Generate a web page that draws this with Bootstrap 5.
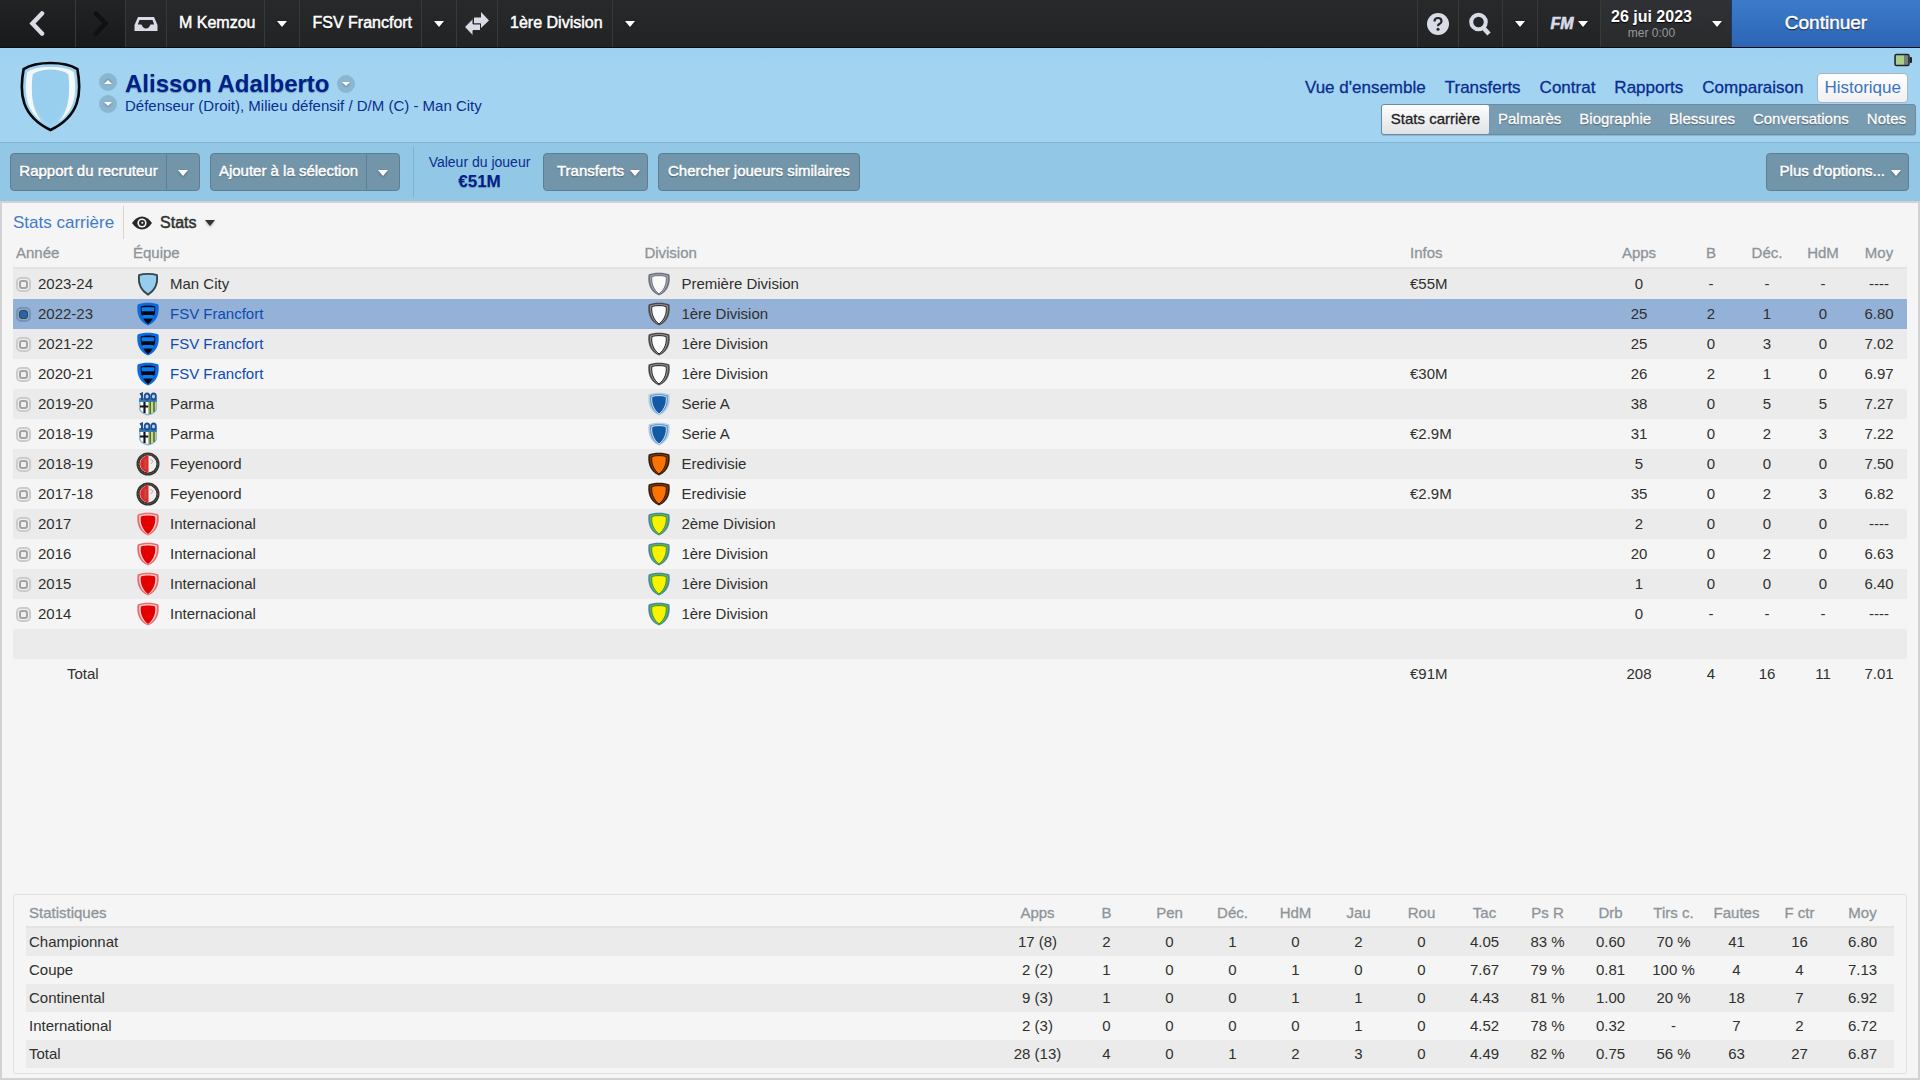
<!DOCTYPE html>
<html lang="fr">
<head>
<meta charset="utf-8">
<meta name="viewport" content="width=device-width, initial-scale=1">
<title>Alisson Adalberto - Historique</title>
<link href="https://cdn.jsdelivr.net/npm/bootstrap@5.3.0/dist/css/bootstrap.min.css" rel="stylesheet">
<style>
body{font-family:"Liberation Sans",Arial,sans-serif;font-size:15px;line-height:20px;color:#2f302c;background:#f5f5f5}
button{font-family:inherit}
.semi{-webkit-text-stroke:.5px currentColor}
.caret{display:inline-block;border:5px solid transparent;border-top:6px solid currentColor;border-bottom:0;filter:drop-shadow(0 1px 1px rgba(0,0,0,.3))}
.caret-sm{border-width:4px 4px 0}
.caret-up{transform:rotate(180deg)}

/* top bar */
.topbar{height:48px;background:linear-gradient(#28292b,#222325);border-bottom:1px solid #0d0d0e}
.topbar button{height:100%;border:0;border-left:1px solid #38393b;background:none;color:#fff;padding:0;font-size:16px;text-shadow:0 1px 1px #000;display:flex;align-items:center;justify-content:center}
.topbar .nav-arrow{background:linear-gradient(#222325,#18191a)}
.topbar .nav-name{padding:0 9px 2px 12px}
.w-back{width:75px}.w-next{width:50px}.w-41{width:41px}.w-35{width:35px}.w-44{width:44px}.w-63{width:63px}
.topbar .date-box{width:131px;background:linear-gradient(#303134,#292a2c);padding:0 9px 0 10px;justify-content:space-between}
.date-day{font-weight:bold;line-height:18px}
.date-hour{font-size:12px;line-height:14px;color:#98999b;text-shadow:none}
.fm-logo{font-size:16px;font-weight:bold;font-style:italic;color:#d9dce6;-webkit-text-stroke:.6px #d9dce6;text-shadow:none}
.topbar .go-on{width:189px;font-size:19px;background:linear-gradient(#3c7bca,#2c65b5);border-left:1px solid #173a6b;padding-bottom:2px}

/* player header */
.player-head{height:94px;background:linear-gradient(#9dd1ef,#a2d4f2 20%);position:relative}
.crest-lg{width:63px;height:71px;margin:13px 0 0 19px}
.step-btns{padding-top:25px;margin-left:17px}
.round-btn{width:18px;height:18px;border-radius:50%;border:0;background:#8ab6d0;color:#fff;padding:0;display:flex;align-items:center;justify-content:center}
.identity{padding-top:22px}
.player-name{font-size:24px;line-height:28px;font-weight:bold;color:#00218a;text-shadow:0 1px 1px rgba(0,0,0,.3);margin:0}
.player-role{color:#0a2d8f;line-height:16px}
.head-nav{padding-top:25px}
.battery{position:absolute;right:8px;top:5px}
.main-tabs{gap:19px;font-size:17px;margin-right:12px}
.main-tabs.semi{-webkit-text-stroke-width:.3px}
.main-tabs a{color:#0a2d8f;text-decoration:none}
.main-tabs a.current{color:#3a74c4;background:linear-gradient(#fff,#f1f1f1);border:1px solid #a5b7c2;border-radius:4px;padding:4px 6px;margin-left:-5px;-webkit-text-stroke-width:0}
.sub-tabs{background:#789cb2;border:1px solid #688ca1;border-radius:3px;font-size:15px;height:31px;margin:1px 4px 0 0;box-shadow:0 1px 1px rgba(0,0,0,.15)}
.sub-tabs.semi{-webkit-text-stroke-width:.3px}
.sub-tabs a{color:#fff;text-decoration:none;line-height:28px;padding:0 9px;text-shadow:0 1px 1px rgba(0,0,0,.5)}
.sub-tabs a.current{color:#222;background:linear-gradient(#fdfdfd,#dfe2e5);border-radius:2px;text-shadow:none}

/* action bar */
.action-bar{height:59px;background:#93c7e6;border-top:1px solid #82b4d2;padding:0 11px 0 10px;gap:10px}
.act{height:38px;background:#7295aa;border:1px solid #5c7f94;border-radius:4px;color:#fff;font-size:15px;padding:0 9px 2px;text-shadow:0 1px 1px rgba(0,0,0,.5)}
.act:hover{background:#688ba0;color:#fff}
.act-main{width:157px;padding:0 0 2px;border-radius:4px 0 0 4px}
.act-drop{width:34px;padding:2px 0 0;border-radius:0 4px 4px 0;margin-left:-1px;display:flex;align-items:center;justify-content:center}
.act-menu{padding:0 7px 2px 13px;gap:6px;display:flex;align-items:center}
.act-menu .caret{margin-top:4px}
.value-box{border-left:1px solid #7fb0ce;height:50px;padding:0 2px 0 14px;margin-left:3px;width:120px;color:#0a2d8f;font-size:14px;line-height:19px}
.value-box strong{font-size:17px;color:#00218a;text-shadow:0 1px 1px rgba(0,0,0,.25)}

/* content panel */
.sheet{border:2px solid #d2d2d2;padding:0 11px 4px 11px}
.view-bar{height:33px;margin-top:3px}
.view-title{font-size:17px;color:#3f7acb;padding-right:9px;border-right:1px solid #d5d5d5;line-height:33px;margin:0;font-weight:normal}
.view-pick{border:0;background:none;font-size:16px;color:#333;padding:0;gap:8px;margin-left:8px}
.grid{--bs-table-bg:transparent;table-layout:fixed;margin:0;color:inherit}
.grid>thead>tr>th{padding:0 6px;font-size:15px;font-weight:normal;color:#8d949a;-webkit-text-stroke:.3px #8d949a;line-height:28px;border-bottom:2px solid #e3e3e3;text-align:center;white-space:nowrap}
.grid>tbody>tr>td,.grid>tbody>tr>th{padding:0 3px;height:30px;line-height:30px;border:0;box-shadow:none;text-align:center;color:#2f302c;font-weight:normal;white-space:nowrap}
.grid>tbody>tr:nth-child(odd)>*{background:#ebebeb}
.grid>tbody>tr.chosen>*{background:#94b1d8}
.grid>*>tr>.t-left{text-align:left;padding-left:6px}
.grid>thead>tr>.t-year{padding-left:3px}
.grid a{color:#0b4bb3;text-decoration:none}
.grid>tbody>tr>.sum-label{padding-left:54px}
.c-year{width:114px}.c-team{width:27%}.c-info{width:191px}.c-apps{width:88px}.c-num{width:56px}
.season{display:flex;align-items:center;gap:7px;margin-left:-3px}
.club{display:flex;align-items:center;gap:10px;margin-left:3px}
.badge-svg{width:24px;height:24px;flex:none}
.pick{appearance:none;width:15px;height:15px;margin:0;border:2px solid #cbcbcb;border-radius:5px;background:#f0f0f0;display:flex;align-items:center;justify-content:center;flex:none}
.pick::before{content:"";width:9px;height:9px;border:2px solid #a3a3a3;border-radius:3px;flex:none}
.pick:checked{background:#8aa7cf;border-color:#7893ba}
.pick:checked::before{background:#2d62a5;border:1px solid #2a4a45}

.stat-box{border:1px solid #e1e1e1;border-radius:2px;padding:5px 12px 5px 12px}
.stat-box .grid>tbody>tr>*{height:28px;line-height:28px}
.stat-box .grid>thead>tr>th{line-height:26px;padding:0}
.stat-box .grid>*>tr>.t-left{padding-left:3px}
.s-apps{width:75px}.s-num{width:63px}
</style>
<script src="https://cdn.jsdelivr.net/npm/bootstrap@5.3.0/dist/js/bootstrap.bundle.min.js"></script>
</head>
<body class="d-flex flex-column min-vh-100">

<svg width="0" height="0" class="position-absolute" aria-hidden="true">
  <defs>
    <path id="sh" d="M12 .8C8 .8 4.300 1.300 1.600 2.400C.4 10 2 18.800 12 23.600C22 18.800 23.600 10 22.400 2.400C19.700 1.300 16 .8 12 .8Z"/>
    <path id="sh-mid" d="M12 2.200C8.800 2.200 5.800 2.500 3.300 3.400C2.400 10.500 4.200 18 12 22.600C19.800 18 21.600 10.500 20.700 3.400C18.200 2.500 15.200 2.200 12 2.200Z"/>
    <path id="sh-in" d="M12 3.600C9.300 3.600 7 3.800 4.900 4.500C4 10.500 6 17.500 12 22C18 17.500 20 10.500 19.100 4.500C17 3.800 14.700 3.600 12 3.600Z"/>
    <symbol id="city" viewBox="0 0 24 24"><path d="M12 1.800C8.500 1.800 5.500 2.200 3 3.200C2.200 10.500 4 18 12 22.600C20 18 21.800 10.500 21 3.200C18.500 2.200 15.500 1.800 12 1.800Z" fill="#96cdec" stroke="#34464f" stroke-width="1.800"/></symbol>
    <symbol id="fsv" viewBox="0 0 24 24"><use href="#sh" fill="#0a6be0"/><use href="#sh-in" fill="#06080c"/><rect x="5.600" y="5.300" width="12.800" height="4" rx="1" fill="#0b7bf5"/><rect x="6.200" y="13" width="11.600" height="3.600" rx="1" fill="#0b7bf5"/></symbol>
    <symbol id="parma" viewBox="0 0 24 24"><path d="M3 8H21V16C21 20 17 22.500 12 23.500C7 22.500 3 20 3 16Z" fill="#8eb6cf"/><path d="M4.500 10H12V22C7.500 21 4.500 19 4.500 16Z" fill="#fff"/><path d="M8.500 9V21M4 14.500H12.500" stroke="#11151c" stroke-width="2.200"/><path d="M12.500 10H19.800V16C19.800 19.500 16.500 21.500 12.500 22Z" fill="#e7dc2c"/><path d="M14.200 10V22M18 10V20" stroke="#2563a5" stroke-width="1.500"/><rect x="3.200" y="6" width="17.600" height="4" fill="#3b79ac"/><path d="M4 2.500L6 1.500V8" fill="none" stroke="#1c4c93" stroke-width="2"/><ellipse cx="11" cy="4.500" rx="2.400" ry="3" fill="#b9d7ea" stroke="#1c4c93" stroke-width="1.800"/><ellipse cx="17.500" cy="4.500" rx="2.400" ry="3" fill="#b9d7ea" stroke="#1c4c93" stroke-width="1.800"/></symbol>
    <symbol id="feye" viewBox="0 0 24 24"><circle cx="12" cy="12" r="11.500" fill="#37342e"/><circle cx="12" cy="12" r="9.800" fill="none" stroke="#6a655a" stroke-dasharray="1.500 1.500"/><circle cx="12" cy="12" r="8.400" fill="#f1f0ee"/><path d="M12.500 3.600A8.400 8.400 0 0 0 12.500 20.400Z" fill="#e0252f"/><path d="M9.500 7V17" stroke="#c5503f" stroke-width="2"/><path d="M14 7L17 9L15 12" fill="none" stroke="#b9b4a8"/></symbol>
    <symbol id="inter" viewBox="0 0 24 24"><use href="#sh" fill="#ec6a6c"/><use href="#sh-mid" fill="#fad0d0"/><use href="#sh-in" fill="#e20000"/></symbol>
    <symbol id="prem" viewBox="0 0 24 24"><use href="#sh" fill="#6c717e"/><use href="#sh-mid" fill="#a9adb8"/><use href="#sh-in" fill="#fafafa" stroke="#4e5463" stroke-width=".8"/></symbol>
    <symbol id="ger" viewBox="0 0 24 24"><use href="#sh" fill="#4a4a4a"/><use href="#sh-mid" fill="#9b9b9b"/><use href="#sh-in" fill="#fcfcfc" stroke="#222" stroke-width="1"/></symbol>
    <symbol id="ita" viewBox="0 0 24 24"><use href="#sh" fill="#b4cde5"/><use href="#sh-mid" fill="#5a90c8"/><use href="#sh-in" fill="#125aa4" stroke="#e6f0f8" stroke-width=".9"/></symbol>
    <symbol id="ned" viewBox="0 0 24 24"><use href="#sh" fill="#3a1c08"/><use href="#sh-mid" fill="#8a4310"/><use href="#sh-in" fill="#fb7300" stroke="#2a1204" stroke-width="1"/></symbol>
    <symbol id="bra" viewBox="0 0 24 24"><use href="#sh" fill="#4a86a0"/><use href="#sh-mid" fill="#74b84c"/><use href="#sh-in" fill="#fbf200" stroke="#2e9a2c" stroke-width="1"/></symbol>
  </defs>
</svg>

<nav class="topbar d-flex" aria-label="Navigation">
  <button type="button" class="nav-arrow w-back border-0" aria-label="Retour"><svg width="20" height="26" viewBox="0 0 20 26"><path d="M14 2.500L4.500 12.500L14 22.500" fill="none" stroke="#d9dce6" stroke-width="4.500" stroke-linecap="round"/></svg></button>
  <button type="button" class="nav-arrow w-next" aria-label="Suivant"><svg width="18" height="26" viewBox="0 0 18 26"><path d="M4 2.500L13.500 12.500L4 22.500" fill="none" stroke="#101112" stroke-width="4.500" stroke-linecap="round"/></svg></button>
  <button type="button" class="w-41" aria-label="Messages"><svg width="24" height="16" viewBox="0 0 24 16"><path fill="#d9dce6" fill-rule="evenodd" d="M4 1H20L23.500 9V15H.5V9ZM5.500 4L3.800 8.500H7.500Q9 12.500 12 12.500T16.500 8.500H20.200L18.500 4Z"/></svg></button>
  <button type="button" class="nav-name semi">M Kemzou</button>
  <button type="button" class="w-35" aria-label="Menu M Kemzou"><span class="caret"></span></button>
  <button type="button" class="nav-name semi">FSV Francfort</button>
  <button type="button" class="w-35" aria-label="Menu FSV Francfort"><span class="caret"></span></button>
  <button type="button" class="w-41" aria-label="Changer"><svg width="24" height="24" viewBox="0 0 24 24"><path fill="#d9dce6" d="M16 0L24 8.500L16 16V11.500H9V5.500H16Z"/><path fill="#d9dce6" stroke="#242527" stroke-width="1" d="M8 6.500L-.5 15L8 23.800V18.500H15.500V12H8Z"/></svg></button>
  <button type="button" class="nav-name semi">1ère Division</button>
  <button type="button" class="w-35" aria-label="Menu 1ère Division"><span class="caret"></span></button>
  <button type="button" class="w-41 ms-auto" aria-label="Aide"><svg width="22" height="22" viewBox="0 0 22 22"><circle cx="11" cy="11" r="11" fill="#d9dce6"/><path d="M7.500 8.500Q7.500 5 11 5T14.500 8.200Q14.500 9.800 12.700 10.800T11 13.200" fill="none" stroke="#242527" stroke-width="2.200"/><circle cx="11" cy="16.200" r="1.500" fill="#242527"/></svg></button>
  <button type="button" class="w-44" aria-label="Rechercher"><svg width="24" height="24" viewBox="0 0 24 24"><circle cx="9.500" cy="10" r="7.300" fill="none" stroke="#d9dce6" stroke-width="4"/><path d="M14.500 16L20 22" stroke="#d9dce6" stroke-width="4.500"/></svg></button>
  <button type="button" class="w-35" aria-label="Menu recherche"><span class="caret"></span></button>
  <button type="button" class="w-63 gap-1"><span class="fm-logo">FM</span><span class="caret"></span></button>
  <button type="button" class="date-box"><span><span class="date-day d-block">26 jui 2023</span><span class="date-hour d-block">mer 0:00</span></span><span class="caret"></span></button>
  <button type="button" class="go-on semi">Continuer</button>
</nav>

<header>
  <div class="player-head d-flex">
    <svg class="crest-lg" viewBox="0 0 62 70" role="img" aria-label="Man City"><path d="M31 2C21 2 11 4 4.500 8C0 32 2 54 31 68C60 54 62 32 57.500 8C51 4 41 2 31 2Z" fill="#a0d3f1" stroke="#05080a" stroke-width="2.600"/><path d="M31 6C22 6 14 7 8 11C5 30 6 48 23 60C11 46 12 30 14 13C24 7.500 38 7.500 48 13C50 30 51 46 39 60C56 48 57 30 54 11C48 7 40 6 31 6Z" fill="#f4f8fb"/><path d="M31 8.500C24 8.500 18 10 13.500 13C11 32 13 50 31 62C49 50 51 32 48.500 13C44 10 38 8.500 31 8.500Z" fill="#98cfef"/></svg>
    <div class="step-btns d-flex flex-column gap-1">
      <button type="button" class="round-btn" aria-label="Joueur précédent"><span class="caret caret-sm caret-up"></span></button>
      <button type="button" class="round-btn" aria-label="Joueur suivant"><span class="caret caret-sm"></span></button>
    </div>
    <div class="identity ms-2">
      <div class="d-flex align-items-center gap-2"><h1 class="player-name">Alisson Adalberto</h1><button type="button" class="round-btn" aria-label="Menu joueur"><span class="caret caret-sm"></span></button></div>
      <div class="player-role">Défenseur (Droit), Milieu défensif / D/M (C) - Man City</div>
    </div>
    <div class="head-nav ms-auto d-flex flex-column align-items-end">
      <nav class="main-tabs semi d-flex align-items-center" aria-label="Sections">
        <a href="#">Vue d'ensemble</a><a href="#">Transferts</a><a href="#">Contrat</a><a href="#">Rapports</a><a href="#">Comparaison</a><a href="#" class="current" aria-current="page">Historique</a>
      </nav>
      <nav class="sub-tabs semi d-flex" aria-label="Historique">
        <a href="#" class="current" aria-current="page">Stats carrière</a><a href="#">Palmarès</a><a href="#">Biographie</a><a href="#">Blessures</a><a href="#">Conversations</a><a href="#">Notes</a>
      </nav>
    </div>
    <svg class="battery" width="18" height="14" viewBox="0 0 18 14"><rect x="1" y="1.500" width="14" height="11" rx="1.500" fill="#74817a" stroke="#20272a" stroke-width="1.500"/><rect x="2" y="2.500" width="8" height="9" fill="#a9d08a"/><rect x="15.500" y="4" width="2.500" height="6" rx="1" fill="#20272a"/></svg>
  </div>
  <div class="action-bar d-flex align-items-center">
    <div class="d-flex">
      <button type="button" class="act act-main semi">Rapport du recruteur</button>
      <button type="button" class="act act-drop" aria-label="Options du rapport"><span class="caret"></span></button>
    </div>
    <div class="d-flex">
      <button type="button" class="act act-main semi">Ajouter à la sélection</button>
      <button type="button" class="act act-drop" aria-label="Options de sélection"><span class="caret"></span></button>
    </div>
    <div class="value-box d-flex flex-column justify-content-center text-center text-nowrap"><span>Valeur du joueur</span><strong>€51M</strong></div>
    <button type="button" class="act act-menu semi">Transferts<span class="caret"></span></button>
    <button type="button" class="act semi">Chercher joueurs similaires</button>
    <button type="button" class="act act-menu semi ms-auto">Plus d'options...<span class="caret"></span></button>
  </div>
</header>

<main class="sheet flex-grow-1 d-flex flex-column">
  <div class="view-bar d-flex align-items-center">
    <h2 class="view-title">Stats carrière</h2>
    <button type="button" class="view-pick semi d-flex align-items-center"><svg width="20" height="14" viewBox="0 0 20 14"><path d="M0 7Q4.500 .5 10 .5T20 7Q15.500 13.500 10 13.500T0 7Z" fill="#26282a"/><circle cx="10" cy="7" r="4.600" fill="#f5f5f5"/><circle cx="10" cy="7" r="3" fill="#26282a"/><circle cx="10.300" cy="6.800" r="1" fill="#f5f5f5"/></svg><span>Stats</span><span class="caret"></span></button>
  </div>

  <table class="table grid">
    <colgroup><col class="c-year"><col class="c-team"><col><col class="c-info"><col class="c-apps"><col class="c-num"><col class="c-num"><col class="c-num"><col class="c-num"></colgroup>
    <thead><tr><th class="t-left t-year">Année</th><th class="t-left">Équipe</th><th class="t-left">Division</th><th class="t-left">Infos</th><th>Apps</th><th>B</th><th>Déc.</th><th>HdM</th><th>Moy</th></tr></thead>
    <tbody>
      <tr><td class="t-left"><label class="season"><input type="radio" class="pick" name="season">2023-24</label></td><td class="t-left"><div class="club"><svg class="badge-svg"><use href="#city"/></svg>Man City</div></td><td class="t-left"><div class="club"><svg class="badge-svg"><use href="#prem"/></svg>Première Division</div></td><td class="t-left">€55M</td><td>0</td><td>-</td><td>-</td><td>-</td><td>----</td></tr>
      <tr class="chosen"><td class="t-left"><label class="season"><input type="radio" class="pick" name="season" checked>2022-23</label></td><td class="t-left"><div class="club"><svg class="badge-svg"><use href="#fsv"/></svg><a href="#">FSV Francfort</a></div></td><td class="t-left"><div class="club"><svg class="badge-svg"><use href="#ger"/></svg>1ère Division</div></td><td></td><td>25</td><td>2</td><td>1</td><td>0</td><td>6.80</td></tr>
      <tr><td class="t-left"><label class="season"><input type="radio" class="pick" name="season">2021-22</label></td><td class="t-left"><div class="club"><svg class="badge-svg"><use href="#fsv"/></svg><a href="#">FSV Francfort</a></div></td><td class="t-left"><div class="club"><svg class="badge-svg"><use href="#ger"/></svg>1ère Division</div></td><td></td><td>25</td><td>0</td><td>3</td><td>0</td><td>7.02</td></tr>
      <tr><td class="t-left"><label class="season"><input type="radio" class="pick" name="season">2020-21</label></td><td class="t-left"><div class="club"><svg class="badge-svg"><use href="#fsv"/></svg><a href="#">FSV Francfort</a></div></td><td class="t-left"><div class="club"><svg class="badge-svg"><use href="#ger"/></svg>1ère Division</div></td><td class="t-left">€30M</td><td>26</td><td>2</td><td>1</td><td>0</td><td>6.97</td></tr>
      <tr><td class="t-left"><label class="season"><input type="radio" class="pick" name="season">2019-20</label></td><td class="t-left"><div class="club"><svg class="badge-svg"><use href="#parma"/></svg>Parma</div></td><td class="t-left"><div class="club"><svg class="badge-svg"><use href="#ita"/></svg>Serie A</div></td><td></td><td>38</td><td>0</td><td>5</td><td>5</td><td>7.27</td></tr>
      <tr><td class="t-left"><label class="season"><input type="radio" class="pick" name="season">2018-19</label></td><td class="t-left"><div class="club"><svg class="badge-svg"><use href="#parma"/></svg>Parma</div></td><td class="t-left"><div class="club"><svg class="badge-svg"><use href="#ita"/></svg>Serie A</div></td><td class="t-left">€2.9M</td><td>31</td><td>0</td><td>2</td><td>3</td><td>7.22</td></tr>
      <tr><td class="t-left"><label class="season"><input type="radio" class="pick" name="season">2018-19</label></td><td class="t-left"><div class="club"><svg class="badge-svg"><use href="#feye"/></svg>Feyenoord</div></td><td class="t-left"><div class="club"><svg class="badge-svg"><use href="#ned"/></svg>Eredivisie</div></td><td></td><td>5</td><td>0</td><td>0</td><td>0</td><td>7.50</td></tr>
      <tr><td class="t-left"><label class="season"><input type="radio" class="pick" name="season">2017-18</label></td><td class="t-left"><div class="club"><svg class="badge-svg"><use href="#feye"/></svg>Feyenoord</div></td><td class="t-left"><div class="club"><svg class="badge-svg"><use href="#ned"/></svg>Eredivisie</div></td><td class="t-left">€2.9M</td><td>35</td><td>0</td><td>2</td><td>3</td><td>6.82</td></tr>
      <tr><td class="t-left"><label class="season"><input type="radio" class="pick" name="season">2017</label></td><td class="t-left"><div class="club"><svg class="badge-svg"><use href="#inter"/></svg>Internacional</div></td><td class="t-left"><div class="club"><svg class="badge-svg"><use href="#bra"/></svg>2ème Division</div></td><td></td><td>2</td><td>0</td><td>0</td><td>0</td><td>----</td></tr>
      <tr><td class="t-left"><label class="season"><input type="radio" class="pick" name="season">2016</label></td><td class="t-left"><div class="club"><svg class="badge-svg"><use href="#inter"/></svg>Internacional</div></td><td class="t-left"><div class="club"><svg class="badge-svg"><use href="#bra"/></svg>1ère Division</div></td><td></td><td>20</td><td>0</td><td>2</td><td>0</td><td>6.63</td></tr>
      <tr><td class="t-left"><label class="season"><input type="radio" class="pick" name="season">2015</label></td><td class="t-left"><div class="club"><svg class="badge-svg"><use href="#inter"/></svg>Internacional</div></td><td class="t-left"><div class="club"><svg class="badge-svg"><use href="#bra"/></svg>1ère Division</div></td><td></td><td>1</td><td>0</td><td>0</td><td>0</td><td>6.40</td></tr>
      <tr><td class="t-left"><label class="season"><input type="radio" class="pick" name="season">2014</label></td><td class="t-left"><div class="club"><svg class="badge-svg"><use href="#inter"/></svg>Internacional</div></td><td class="t-left"><div class="club"><svg class="badge-svg"><use href="#bra"/></svg>1ère Division</div></td><td></td><td>0</td><td>-</td><td>-</td><td>-</td><td>----</td></tr>
      <tr><td colspan="9"></td></tr>
      <tr><th scope="row" class="t-left sum-label">Total</th><td></td><td></td><td class="t-left">€91M</td><td>208</td><td>4</td><td>16</td><td>11</td><td>7.01</td></tr>
    </tbody>
  </table>

  <section class="stat-box mt-auto">
    <table class="table grid">
      <colgroup><col><col class="s-apps"><col class="s-num" span="13"></colgroup>
      <thead><tr><th class="t-left">Statistiques</th><th>Apps</th><th>B</th><th>Pen</th><th>Déc.</th><th>HdM</th><th>Jau</th><th>Rou</th><th>Tac</th><th>Ps R</th><th>Drb</th><th>Tirs c.</th><th>Fautes</th><th>F ctr</th><th>Moy</th></tr></thead>
      <tbody>
        <tr><th scope="row" class="t-left">Championnat</th><td>17 (8)</td><td>2</td><td>0</td><td>1</td><td>0</td><td>2</td><td>0</td><td>4.05</td><td>83 %</td><td>0.60</td><td>70 %</td><td>41</td><td>16</td><td>6.80</td></tr>
        <tr><th scope="row" class="t-left">Coupe</th><td>2 (2)</td><td>1</td><td>0</td><td>0</td><td>1</td><td>0</td><td>0</td><td>7.67</td><td>79 %</td><td>0.81</td><td>100 %</td><td>4</td><td>4</td><td>7.13</td></tr>
        <tr><th scope="row" class="t-left">Continental</th><td>9 (3)</td><td>1</td><td>0</td><td>0</td><td>1</td><td>1</td><td>0</td><td>4.43</td><td>81 %</td><td>1.00</td><td>20 %</td><td>18</td><td>7</td><td>6.92</td></tr>
        <tr><th scope="row" class="t-left">International</th><td>2 (3)</td><td>0</td><td>0</td><td>0</td><td>0</td><td>1</td><td>0</td><td>4.52</td><td>78 %</td><td>0.32</td><td>-</td><td>7</td><td>2</td><td>6.72</td></tr>
        <tr><th scope="row" class="t-left">Total</th><td>28 (13)</td><td>4</td><td>0</td><td>1</td><td>2</td><td>3</td><td>0</td><td>4.49</td><td>82 %</td><td>0.75</td><td>56 %</td><td>63</td><td>27</td><td>6.87</td></tr>
      </tbody>
    </table>
  </section>
</main>
</body>
</html>
